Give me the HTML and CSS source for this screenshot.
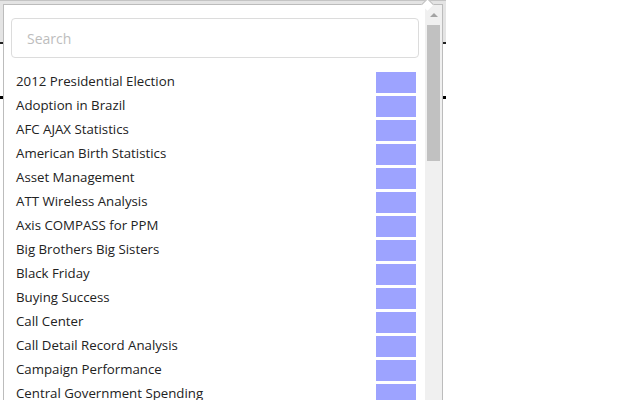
FILE: index.html
```html
<!DOCTYPE html>
<html lang="en">
<head>
    <meta charset="UTF-8">
    <title>Field list</title>
    <link rel="stylesheet" href="styles.css">
</head>
<body>
    <div class="toolbar"></div>
    <div class="toolbar-rule"></div>

    <div class="popup">
        <div class="popup-content">
            <div class="search-box">
                <input type="text" class="search" placeholder="Search">
            </div>
            <ul class="app-list">
                <li><span>2012 Presidential Election</span><i class="swatch"></i></li>
                <li><span>Adoption in Brazil</span><i class="swatch"></i></li>
                <li><span>AFC AJAX Statistics</span><i class="swatch"></i></li>
                <li><span>American Birth Statistics</span><i class="swatch"></i></li>
                <li><span>Asset Management</span><i class="swatch"></i></li>
                <li><span>ATT Wireless Analysis</span><i class="swatch"></i></li>
                <li><span>Axis COMPASS for PPM</span><i class="swatch"></i></li>
                <li><span>Big Brothers Big Sisters</span><i class="swatch"></i></li>
                <li><span>Black Friday</span><i class="swatch"></i></li>
                <li><span>Buying Success</span><i class="swatch"></i></li>
                <li><span>Call Center</span><i class="swatch"></i></li>
                <li><span>Call Detail Record Analysis</span><i class="swatch"></i></li>
                <li><span>Campaign Performance</span><i class="swatch"></i></li>
                <li><span>Central Government Spending</span><i class="swatch"></i></li>
            </ul>
        </div>
        <div class="scrollbar">
            <div class="scroll-arrow"></div>
            <div class="scroll-thumb"></div>
        </div>
    </div>
</body>
</html>
```

FILE: styles.css
```css
body {
    margin: 0;
    background: #fff;
    font-family: "Open Sans", "Liberation Sans", sans-serif;
    overflow: hidden;
}

.toolbar {
    width: 446px;
    height: 44px;
    background: #e4e4e4;
    border-top: 1px solid #c4c4c4;
    border-bottom: 2px solid #222;
    box-sizing: border-box;
}

.toolbar-rule {
    width: 446px;
    height: 3px;
    margin-top: 52px;
    background: #000;
}

.popup {
    position: absolute;
    top: 4px;
    left: 3px;
    width: 440px;
    height: 410px;
    display: flex;
    background: #fff;
    border: 1px solid #bcbcbc;
    box-sizing: border-box;
}

.popup::before {
    content: "";
    position: absolute;
    top: -5px;
    left: 419px;
    width: 8px;
    height: 8px;
    background: #fff;
    border-top: 1px solid #bcbcbc;
    border-left: 1px solid #bcbcbc;
    transform: rotate(45deg);
}

.popup-content {
    flex: 1;
    padding: 13px 6px 0 7px;
}

.search-box {
    display: flex;
}

.search {
    flex: 1;
    height: 40px;
    box-sizing: border-box;
    border: 1px solid #dcdcdc;
    border-radius: 4px;
    padding: 0 15px;
    font-family: inherit;
    font-size: 14px;
    color: #333;
    outline: none;
}

.search::placeholder {
    color: #bdbdbd;
}

.app-list {
    list-style: none;
    margin: 14px 0 0;
    padding: 0 3px 0 5px;
}

.app-list li {
    display: flex;
    align-items: flex-start;
    justify-content: space-between;
    height: 24px;
    font-size: 13.25px;
    line-height: 18px;
    color: #222;
}

.swatch {
    width: 40px;
    height: 21px;
    background: #9da3ff;
}

.scrollbar {
    width: 17px;
    background: #f0f0f0;
    display: flex;
    flex-direction: column;
    align-items: center;
}

.scroll-arrow {
    margin-top: 8px;
    width: 0;
    height: 0;
    border-left: 4px solid transparent;
    border-right: 4px solid transparent;
    border-bottom: 4px solid #a3a3a3;
}

.scroll-thumb {
    margin-top: 8px;
    width: 13px;
    height: 136px;
    background: #c1c1c1;
}
```
